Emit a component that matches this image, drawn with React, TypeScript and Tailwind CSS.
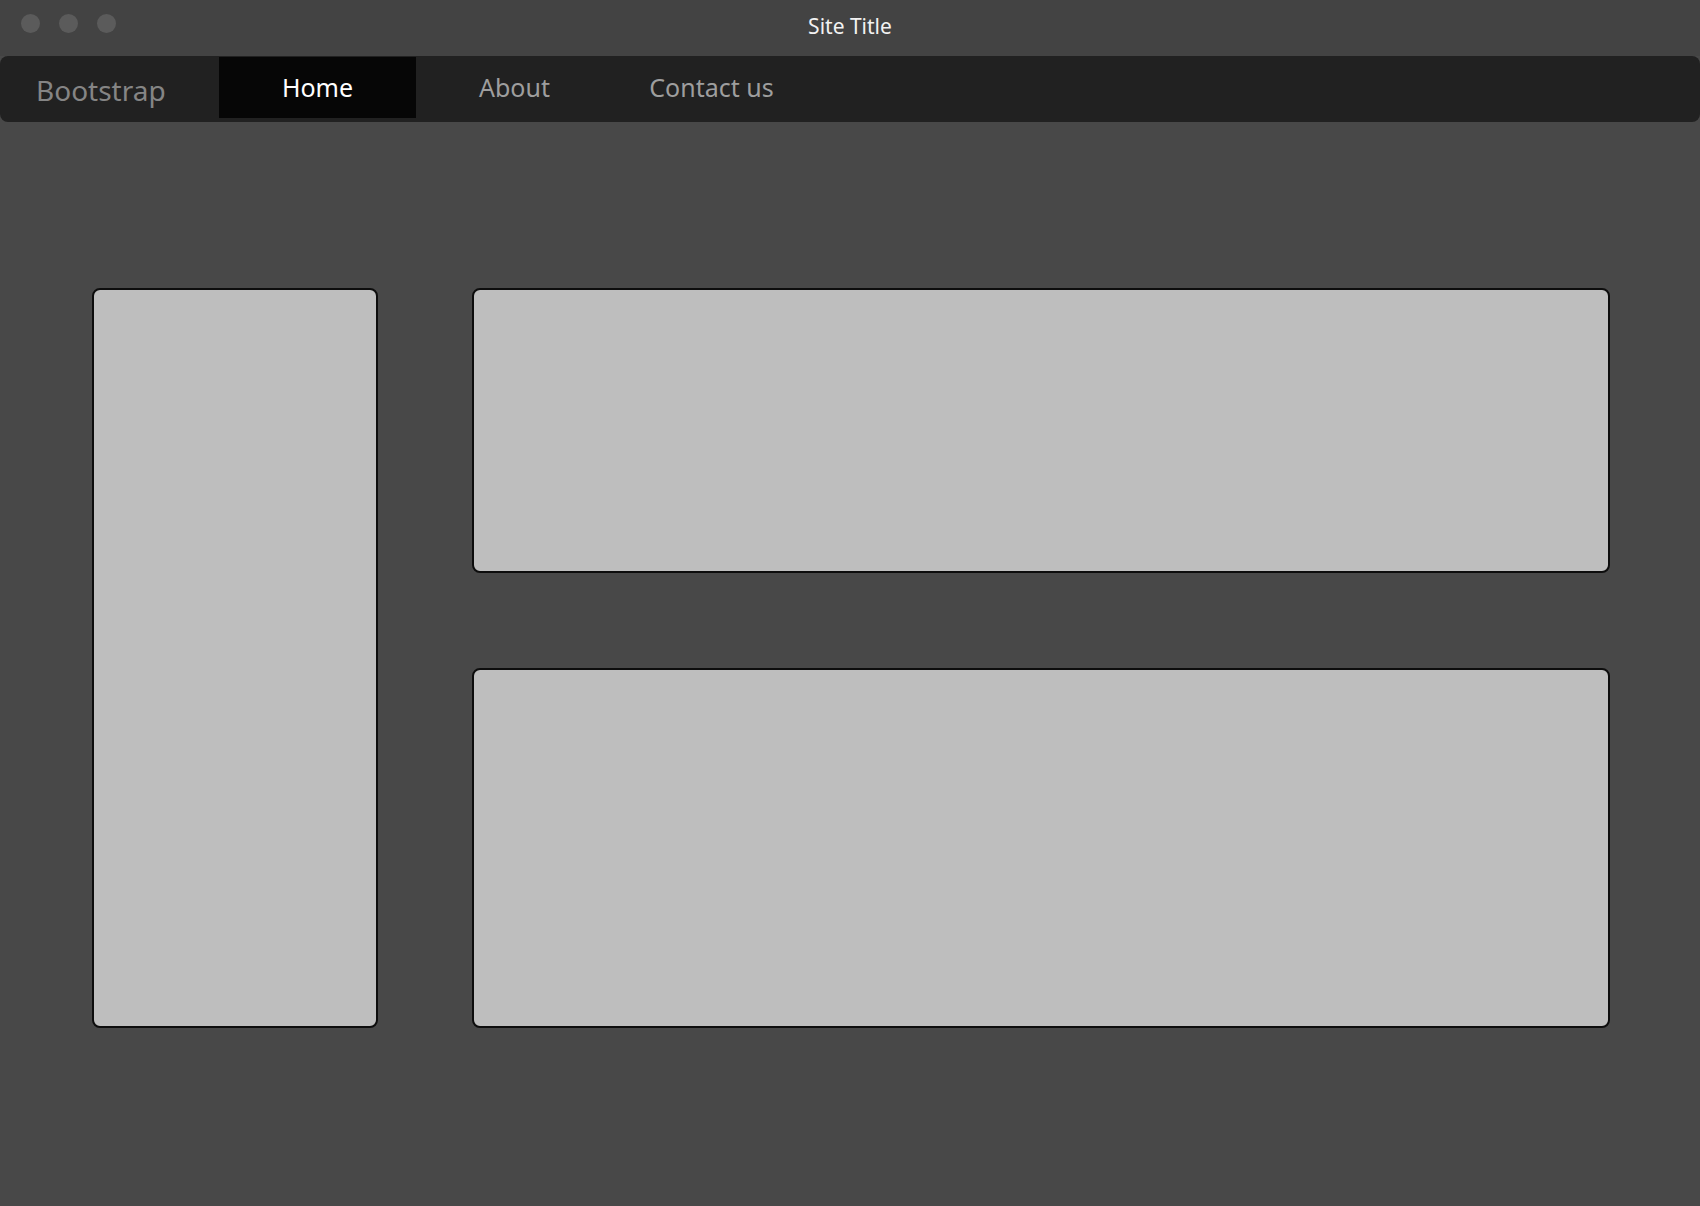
import React from 'react';

const navLinks = [
  { label: 'Home', active: true },
  { label: 'About', active: false },
  { label: 'Contact us', active: false },
];

const WindowDots: React.FC = () => (
  <div className="absolute left-[21px] top-[14px] flex gap-[19px]">
    <span className="w-[19px] h-[19px] rounded-full bg-[#5b5b5b]" />
    <span className="w-[19px] h-[19px] rounded-full bg-[#5b5b5b]" />
    <span className="w-[19px] h-[19px] rounded-full bg-[#5b5b5b]" />
  </div>
);

const Panel: React.FC<{ className?: string }> = ({ className = '' }) => (
  <div className={`bg-[#bebebe] border-2 border-[#0d0d0d] rounded-[8px] ${className}`} />
);

export default function App() {
  return (
    <div className="w-[1700px] h-[1206px] bg-[#484848] flex flex-col overflow-hidden font-['Noto_Sans',sans-serif]">
      {/* title bar */}
      <div className="relative h-[56px] shrink-0 bg-[#434343] flex items-center justify-center">
        <WindowDots />
        <span className="text-[21px] text-[#f2f2f2] leading-none -mt-[4px]">Site Title</span>
      </div>

      {/* navbar */}
      <nav className="h-[66px] shrink-0 bg-[#212121] rounded-[8px] flex items-start pt-[1px]">
        <div className="w-[219px] h-[61px] flex items-center pl-[36px]">
          <span className="text-[28px] text-[#858585] leading-none mt-[4px]">Bootstrap</span>
        </div>
        {navLinks.map(link => (
          <a
            key={link.label}
            className={`w-[197px] h-[61px] flex items-center justify-center text-[25px] leading-none ${
              link.active ? 'bg-[#060606] text-white' : 'text-[#9e9e9e]'
            }`}
          >
            <span>{link.label}</span>
          </a>
        ))}
      </nav>

      {/* content */}
      <main className="flex-1 flex gap-[94px] pl-[92px] pr-[90px] pt-[166px]">
        <Panel className="w-[286px] h-[740px] shrink-0" />
        <div className="flex-1 flex flex-col gap-[95px]">
          <Panel className="h-[285px]" />
          <Panel className="h-[360px]" />
        </div>
      </main>
    </div>
  );
}
